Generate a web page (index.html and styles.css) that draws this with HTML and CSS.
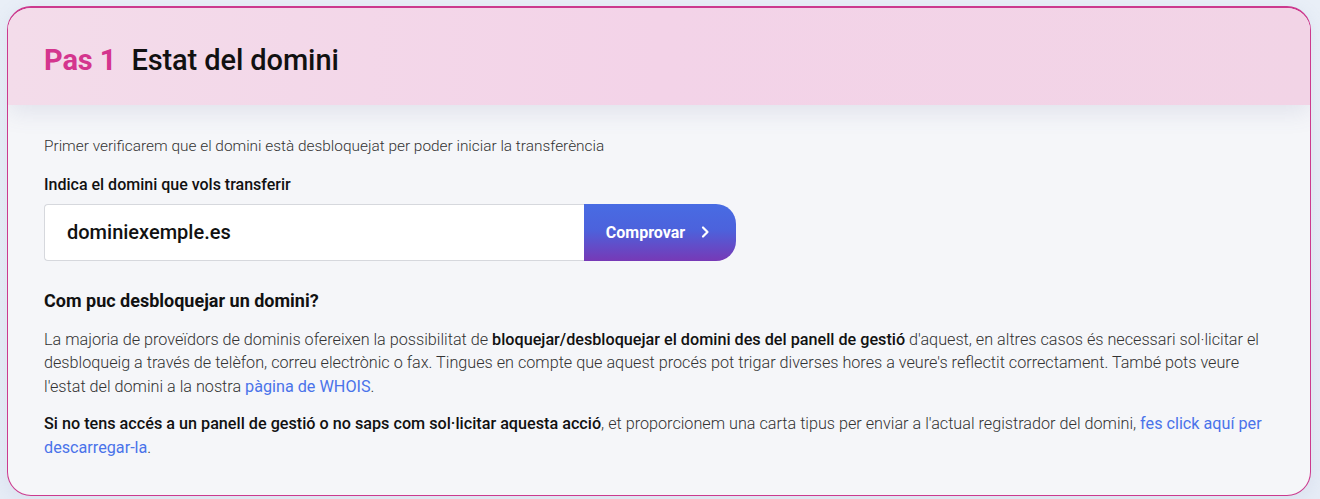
FILE: index.html
```html
<!DOCTYPE html>
<html lang="ca">
<head>
  <meta charset="UTF-8" />
  <meta name="viewport" content="width=device-width, initial-scale=1" />
  <title>Transferència de domini</title>
  <link rel="stylesheet" href="styles.css">
</head>
<body>

  <section class="step">
    <header class="step-head">
      <h2><span class="step-num">Pas 1</span> Estat del domini</h2>
    </header>

    <div class="step-body">
      <p class="intro">Primer verificarem que el domini està desbloquejat per poder iniciar la transferència</p>

      <label class="field-label" for="domain">Indica el domini que vols transferir</label>
      <form class="check" onsubmit="return false">
        <input type="text" id="domain" value="dominiexemple.es" />
        <button type="submit">
          Comprovar
          <svg width="10" height="14" viewBox="0 0 10 14" aria-hidden="true">
            <path d="M3 2.5 L7.5 7 L3 11.5" fill="none" stroke="#fff" stroke-width="2.2" stroke-linecap="round" stroke-linejoin="round"/>
          </svg>
        </button>
      </form>

      <h3>Com puc desbloquejar un domini?</h3>
      <p>La majoria de proveïdors de dominis ofereixen la possibilitat de <b>bloquejar/desbloquejar el domini des del panell de gestió</b> d'aquest, en altres casos és necessari sol·licitar el desbloqueig a través de telèfon, correu electrònic o fax. Tingues en compte que aquest procés pot trigar diverses hores a veure's reflectit correctament. També pots veure l'estat del domini a la nostra <a href="#">pàgina de WHOIS</a>.</p>
      <p><b>Si no tens accés a un panell de gestió o no saps com sol·licitar aquesta acció</b>, et proporcionem una carta tipus per enviar a l'actual registrador del domini, <a href="#">fes click aquí per descarregar-la</a>.</p>
    </div>
  </section>

</body>
</html>
```

FILE: styles.css
```css
* { margin: 0; padding: 0; box-sizing: border-box; }
html, body {
  height: 100%;
  font-family: Roboto, 'Noto Sans', sans-serif;
  background: linear-gradient(180deg, #e9eff7 0%, #e6ecf6 100%);
  color: #222;
}
body { padding: 6px 9px 4px 7px; }

.step {
  border: 1.5px solid #cc3a8e;
  border-top-width: 2px;
  border-radius: 24px;
  overflow: hidden;
  background: #f5f6f9;
  box-shadow: 0 4px 18px rgba(120, 140, 180, 0.12);
}

.step-head {
  height: 97px;
  display: flex;
  align-items: center;
  padding: 7px 36px 0;
  background: linear-gradient(90deg, #f3dcea 0%, #f3d3e8 50%, #f2d4e6 100%);
  box-shadow: 0 8px 22px rgba(90, 100, 150, 0.12);
  position: relative;
}
.step-head h2 {
  font-size: 29px;
  font-weight: 500;
  color: #111;
  letter-spacing: -0.1px;
}
.step-num {
  color: #d4358e;
  font-weight: 700;
  margin-right: 8px;
}

.step-body {
  padding: 30px 36px 36px;
}
.step-body p {
  font-size: 16.2px;
  font-weight: 300;
  line-height: 23.5px;
  color: #333;
  margin-bottom: 14px;
}
.step-body p:last-child { margin-bottom: 0; }
.step-body p.intro {
  font-size: 15.4px;
  margin-bottom: 16px;
}
.step-body b { font-weight: 500; color: #111; }
.step-body a { color: #4a73ea; text-decoration: none; font-weight: 400; }

.field-label {
  display: block;
  font-size: 16px;
  font-weight: 500;
  color: #111;
  margin-bottom: 10px;
}

.check {
  display: flex;
  margin-bottom: 29px;
}
.check input {
  width: 540px;
  height: 57px;
  border: 1px solid #d6d8dd;
  border-right: none;
  border-radius: 4px 0 0 4px;
  background: #fff;
  padding: 0 22px;
  font-family: inherit;
  font-size: 20px;
  font-weight: 500;
  color: #111;
  outline: none;
}
.check button {
  width: 152px;
  height: 57px;
  border: none;
  border-radius: 0 20px 20px 0;
  background: linear-gradient(180deg, #486ce3 0%, #4c62dc 45%, #7739b6 100%);
  color: #fff;
  font-family: inherit;
  font-size: 16px;
  font-weight: 700;
  display: flex;
  align-items: center;
  justify-content: center;
  gap: 15px;
  padding-left: 0;
  padding-right: 4px;
  cursor: pointer;
}

.step-body h3 {
  font-size: 18px;
  font-weight: 700;
  color: #111;
  margin-bottom: 17px;
}
```
